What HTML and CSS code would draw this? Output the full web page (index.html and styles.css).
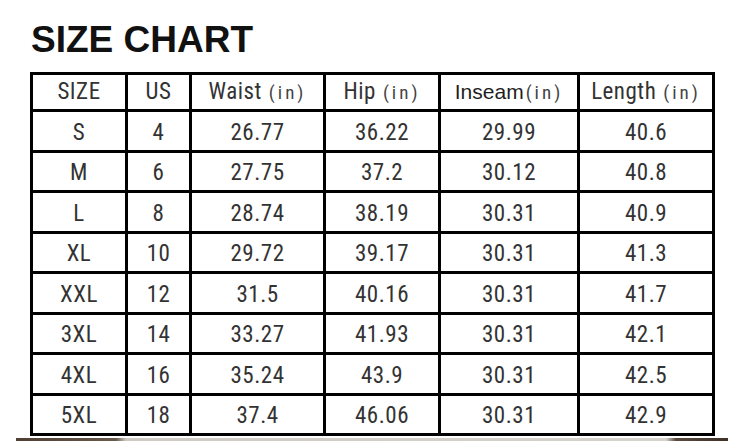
FILE: index.html
```html
<!DOCTYPE html>
<html lang="en">
<head>
<meta charset="utf-8">
<title>Size Chart</title>
<link rel="stylesheet" href="styles.css">
</head>
<body>
<div class="page">
  <h1 class="title">SIZE CHART</h1>
  <table class="chart">
    <colgroup>
      <col class="c-size"><col class="c-us"><col class="c-waist"><col class="c-hip"><col class="c-inseam"><col class="c-length">
    </colgroup>
    <thead>
      <tr>
        <th>SIZE</th>
        <th>US</th>
        <th>Waist<span class="unit">(in)</span></th>
        <th>Hip<span class="unit">(in)</span></th>
        <th><span class="alt">Inseam</span><span class="unit tight">(in)</span></th>
        <th>Length<span class="unit">(in)</span></th>
      </tr>
    </thead>
    <tbody>
      <tr><td>S</td><td>4</td><td>26.77</td><td>36.22</td><td>29.99</td><td>40.6</td></tr>
      <tr><td>M</td><td>6</td><td>27.75</td><td>37.2</td><td>30.12</td><td>40.8</td></tr>
      <tr><td>L</td><td>8</td><td>28.74</td><td>38.19</td><td>30.31</td><td>40.9</td></tr>
      <tr><td>XL</td><td>10</td><td>29.72</td><td>39.17</td><td>30.31</td><td>41.3</td></tr>
      <tr><td>XXL</td><td>12</td><td>31.5</td><td>40.16</td><td>30.31</td><td>41.7</td></tr>
      <tr><td>3XL</td><td>14</td><td>33.27</td><td>41.93</td><td>30.31</td><td>42.1</td></tr>
      <tr><td>4XL</td><td>16</td><td>35.24</td><td>43.9</td><td>30.31</td><td>42.5</td></tr>
      <tr><td>5XL</td><td>18</td><td>37.4</td><td>46.06</td><td>30.31</td><td>42.9</td></tr>
    </tbody>
  </table>
  <div class="strip"></div>
</div>
</body>
</html>
```
FILE: styles.css
```css
html, body {
  margin: 0;
  padding: 0;
  background: #ffffff;
}
body {
  width: 740px;
  height: 441px;
  overflow: hidden;
}
.page {
  padding-top: 21px;
}
.title {
  margin: 0 0 14px 31px;
  font-family: "Liberation Sans", Arial, sans-serif;
  font-weight: 700;
  font-size: 37px;
  line-height: 37px;
  color: #111111;
  letter-spacing: 0;
}
.chart {
  margin-left: 30px;
  border-collapse: collapse;
  table-layout: fixed;
  border: 3px solid #000;
  font-family: "Roboto Condensed", "Noto Sans", "DejaVu Sans Condensed", sans-serif;
  font-stretch: 70%;
  color: #333333;
}
.c-size { width: 95px; }
.c-us { width: 64px; }
.c-waist { width: 134px; }
.c-hip { width: 115px; }
.c-inseam { width: 139px; }
.c-length { width: 135px; }
.chart th,
.chart td {
  border: 3px solid #000;
  padding: 0;
  text-align: center;
  vertical-align: middle;
  font-weight: 400;
  font-size: 23px;
  line-height: 24px;
  letter-spacing: 0.5px;
}
.chart th {
  height: 34px;
}
.chart td {
  height: 40.5px;
  padding-top: 4px;
  box-sizing: border-box;
}
.unit {
  font-size: 19px;
  letter-spacing: 3px;
  margin-left: 7px;
  color: #444;
}
.unit.tight {
  margin-left: 2px;
}
.alt {
  font-family: "Liberation Sans", Arial, sans-serif;
  font-stretch: normal;
  font-size: 21px;
  color: #1e1e1e;
  letter-spacing: 0;
}
.strip {
  margin: 2px 0 0 16px;
  width: 712px;
  height: 3px;
  background: linear-gradient(to right, #4e3f33 0, #6a5a4c 100px, #cfcac4 110px, #d6d2cc 650px, #5a4a3e 660px, #3e3128 712px);
}
```
